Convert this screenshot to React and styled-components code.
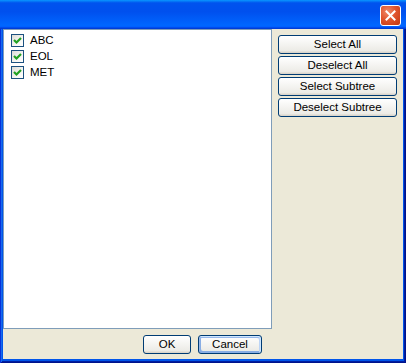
import React from "react";
import styled, { createGlobalStyle } from "styled-components";

const Global = createGlobalStyle`
  html, body { margin: 0; padding: 0; background: #ffffff; }
  body { font-family: "Liberation Sans", Arial, sans-serif; font-size: 11px; color: #000; }
`;

const Window = styled.div`
  width: 406px;
  height: 363px;
  display: flex;
  flex-direction: column;
  overflow: hidden;
`;

const TitleBar = styled.div`
  height: 29px;
  flex: none;
  display: flex;
  justify-content: flex-end;
  align-items: flex-start;
  padding: 5px 5px 0 0;
  box-sizing: border-box;
  background: linear-gradient(
    180deg,
    #0997ff 0%,
    #0053ee 10%,
    #0050ee 40%,
    #0066ff 86%,
    #0066ff 90%,
    #005bff 93%,
    #003dd7 97%,
    #003dd7 100%
  );
`;

const CloseButton = styled.button`
  width: 21px;
  height: 21px;
  padding: 0;
  box-sizing: border-box;
  border: 1px solid #ffffff;
  border-radius: 3px;
  background: radial-gradient(circle at 35% 30%, #f08a6a 0%, #e0552e 45%, #c2350f 100%);
  display: flex;
  align-items: center;
  justify-content: center;
`;

const Frame = styled.div`
  flex: 1;
  display: flex;
  padding: 0 3px 4px 3px;
  background: #0055ea;
  box-shadow: inset 1px 0 #0831d9, inset -1px -1px #00138c, inset 2px 0 #166aee, inset -2px -2px #001ea0;
`;

const Client = styled.div`
  flex: 1;
  display: flex;
  flex-direction: column;
  background: #ece9d8;
`;

const TopArea = styled.div`
  display: flex;
  height: 300px;
`;

const ListBox = styled.div`
  width: 269px;
  height: 300px;
  box-sizing: border-box;
  border: 1px solid #7f9db9;
  background: #ffffff;
  padding: 4px 0 0 7px;
`;

const Row = styled.div`
  height: 16px;
  display: flex;
  align-items: flex-start;
`;

const Box = styled.span`
  width: 13px;
  height: 13px;
  box-sizing: border-box;
  border: 1px solid #1c5180;
  background: linear-gradient(135deg, #dcdcd7 0%, #f6f6f3 60%, #ffffff 100%);
  display: flex;
  align-items: center;
  justify-content: center;
  flex: none;
`;

const Label = styled.span`
  margin-left: 6px;
  line-height: 13px;
  font-size: 11.5px;
`;

const SideButtons = styled.div`
  display: flex;
  flex-direction: column;
  gap: 2px;
  padding-top: 6px;
  margin-left: 6px;
  width: 119px;
`;

const Button = styled.button`
  width: ${(p) => p.$w || 119}px;
  height: 19px;
  padding: 0;
  box-sizing: border-box;
  border: 1px solid #003c74;
  border-radius: 3px;
  background: linear-gradient(180deg, #ffffff 0%, #ecebe6 86%, #d6d0c5 100%);
  font-family: "Liberation Sans", Arial, sans-serif;
  font-size: 11.5px;
  color: #000;
  line-height: 17px;
  box-shadow: ${(p) =>
    p.$default
      ? "inset -1px 1px #cee7ff, inset 1px 2px #98b8ea, inset -2px 2px #bcd4f6, inset 1px -1px #89ade4, inset 2px -2px #89ade4"
      : "none"};
`;

const BottomBar = styled.div`
  flex: 1;
  display: flex;
  justify-content: center;
  align-items: flex-start;
  gap: 7px;
  padding: 6px 1px 0 0;
`;

const Check = () => (
  <svg width="9" height="9" viewBox="0 0 9 9">
    <path d="M1 4 L3.5 6.5 L8 2" fill="none" stroke="#21a121" strokeWidth="2.2" />
  </svg>
);

const CloseX = () => (
  <svg width="11" height="11" viewBox="0 0 11 11">
    <path d="M1.5 1.5 L9.5 9.5 M9.5 1.5 L1.5 9.5" stroke="#ffffff" strokeWidth="2" strokeLinecap="square" />
  </svg>
);

const items = ["ABC", "EOL", "MET"];
const side = ["Select All", "Deselect All", "Select Subtree", "Deselect Subtree"];

export default function App() {
  return (
    <>
      <Global />
      <Window>
        <TitleBar>
          <CloseButton aria-label="Close">
            <CloseX />
          </CloseButton>
        </TitleBar>
        <Frame>
          <Client>
            <TopArea>
              <ListBox>
                {items.map((it) => (
                  <Row key={it}>
                    <Box>
                      <Check />
                    </Box>
                    <Label>{it}</Label>
                  </Row>
                ))}
              </ListBox>
              <SideButtons>
                {side.map((s) => (
                  <Button key={s}>{s}</Button>
                ))}
              </SideButtons>
            </TopArea>
            <BottomBar>
              <Button $w={48}>OK</Button>
              <Button $w={64} $default>Cancel</Button>
            </BottomBar>
          </Client>
        </Frame>
      </Window>
    </>
  );
}
